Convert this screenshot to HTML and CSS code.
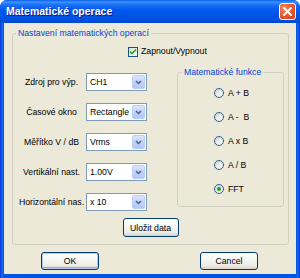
FILE: index.html
```html
<!DOCTYPE html>
<html lang="cs">
<head>
  <meta charset="UTF-8" />
  <title>Matematické operace</title>
  <link rel="stylesheet" href="styles.css">
</head>
<body>
  <div class="window">
    <div class="titlebar">
      <span class="title">Matematické operace</span>
      <span class="close">
        <svg width="9" height="9" viewBox="0 0 9 9"><path d="M1 1 L8 8 M8 1 L1 8" stroke="#fff" stroke-width="1.8" stroke-linecap="square"/></svg>
      </span>
    </div>

    <div class="client">
      <fieldset class="group main-group">
        <legend>Nastavení matematických operací</legend>

        <div class="check-row">
          <span class="checkbox">
            <svg width="8" height="8" viewBox="0 0 8 8"><path d="M1 3.5 L3 5.5 L7 1.5" fill="none" stroke="#21a121" stroke-width="1.6"/></svg>
          </span>
          <span>Zapnout/Vypnout</span>
        </div>

        <div class="columns">
          <div class="fields">
            <div class="field">
              <span class="lbl">Zdroj pro výp.</span>
              <div class="combo"><span class="value">CH1</span><span class="drop"><svg width="7" height="5" viewBox="0 0 7 5"><path d="M1 1 L3.5 3.5 L6 1" fill="none" stroke="#4d6185" stroke-width="1.5"/></svg></span></div>
            </div>
            <div class="field">
              <span class="lbl">Časové okno</span>
              <div class="combo"><span class="value">Rectangle</span><span class="drop"><svg width="7" height="5" viewBox="0 0 7 5"><path d="M1 1 L3.5 3.5 L6 1" fill="none" stroke="#4d6185" stroke-width="1.5"/></svg></span></div>
            </div>
            <div class="field">
              <span class="lbl">Měřítko V / dB</span>
              <div class="combo"><span class="value">Vrms</span><span class="drop"><svg width="7" height="5" viewBox="0 0 7 5"><path d="M1 1 L3.5 3.5 L6 1" fill="none" stroke="#4d6185" stroke-width="1.5"/></svg></span></div>
            </div>
            <div class="field">
              <span class="lbl">Vertikální nast.</span>
              <div class="combo"><span class="value">1.00V</span><span class="drop"><svg width="7" height="5" viewBox="0 0 7 5"><path d="M1 1 L3.5 3.5 L6 1" fill="none" stroke="#4d6185" stroke-width="1.5"/></svg></span></div>
            </div>
            <div class="field">
              <span class="lbl">Horizontální nas.</span>
              <div class="combo"><span class="value">x 10</span><span class="drop"><svg width="7" height="5" viewBox="0 0 7 5"><path d="M1 1 L3.5 3.5 L6 1" fill="none" stroke="#4d6185" stroke-width="1.5"/></svg></span></div>
            </div>
          </div>

          <fieldset class="group func-group">
            <legend>Matematické funkce</legend>
            <div class="radios">
              <div class="radio-row"><span class="radio"></span><span class="rtext">A + B</span></div>
              <div class="radio-row"><span class="radio"></span><span class="rtext">A -  B</span></div>
              <div class="radio-row"><span class="radio"></span><span class="rtext">A x B</span></div>
              <div class="radio-row"><span class="radio"></span><span class="rtext">A / B</span></div>
              <div class="radio-row"><span class="radio checked"></span><span class="rtext">FFT</span></div>
            </div>
          </fieldset>
        </div>

        <div class="save-row">
          <button class="btn save">Uložit data</button>
        </div>
      </fieldset>

      <div class="actions">
        <button class="btn default">OK</button>
        <button class="btn">Cancel</button>
      </div>
    </div>
  </div>
</body>
</html>
```

FILE: styles.css
```css
* {
  box-sizing: border-box;
}

body {
  margin: 0;
  background: #fff;
  font-family: "Liberation Sans", Arial, sans-serif;
  font-size: 8.7px;
  line-height: 11px;
  color: #000;
}

.window {
  width: 300px;
  height: 278px;
  display: flex;
  flex-direction: column;
  background: linear-gradient(to right, #0831d9 0, #166aee 2px, #0054e3 4px, #0054e3 296px, #166aee 298px, #0831d9 300px);
  border-radius: 7px 7px 0 0;
}

.titlebar {
  height: 23px;
  display: flex;
  align-items: center;
  justify-content: space-between;
  padding: 0 4px 0 6px;
  background: linear-gradient(to bottom, #0a5fe6 0, #3c92ff 2px, #1a6ef5 5px, #0058ee 10px, #0054e3 16px, #0050dd 20px, #0046cf 23px);
  border-radius: 7px 7px 0 0;
}

.title {
  color: #fff;
  font-weight: bold;
  font-size: 10.5px;
  text-shadow: 1px 1px #0a1a8a;
}

.close {
  width: 17px;
  height: 17px;
  display: flex;
  align-items: center;
  justify-content: center;
  border: 1px solid #fff;
  border-radius: 3px;
  background: radial-gradient(circle at 30% 30%, #f08a66 0, #e2562d 55%, #c7421a 100%);
}

.client {
  flex: 1;
  margin: 0 4px 4px;
  background: #ece9d8;
  display: flex;
  flex-direction: column;
}

.group {
  margin: 0;
  padding: 0;
  border: 1px solid #d0d0bf;
  border-radius: 3px;
  min-width: 0;
}

.group legend {
  color: #0046d5;
  padding: 0 2px;
  line-height: 11px;
}

.main-group {
  margin: 5px 7px 0 8px;
  padding-bottom: 7px;
}

.main-group > legend {
  margin-left: 3px;
}

.check-row {
  display: flex;
  align-items: center;
  gap: 3px;
  height: 11px;
  margin-top: 7px;
  padding-left: 115px;
}

.checkbox {
  width: 10px;
  height: 10px;
  display: flex;
  align-items: center;
  justify-content: center;
  border: 1px solid #1c5180;
  background: linear-gradient(135deg, #dcdcd7, #fff);
}

.columns {
  display: flex;
  align-items: flex-start;
  margin-top: 10px;
}

.fields {
  width: 134px;
  padding-left: 4px;
}

.field {
  height: 30px;
  display: flex;
  align-items: center;
}

.lbl {
  width: 69px;
  text-align: center;
  white-space: nowrap;
}

.combo {
  width: 61px;
  height: 18px;
  display: flex;
  align-items: stretch;
  border: 1px solid #7f9db9;
  background: #fff;
  padding: 1px;
}

.combo .value {
  flex: 1;
  padding-left: 2px;
  display: flex;
  align-items: center;
}

.combo .drop {
  width: 13px;
  display: flex;
  align-items: center;
  justify-content: center;
  border: 1px solid #b9cef7;
  border-radius: 2px;
  background: linear-gradient(to bottom, #dbe6fd, #c1d3fb 50%, #b4c8f6);
}

.func-group {
  margin-left: 30px;
  width: 107px;
  height: 140px;
}

.func-group > legend {
  margin-left: 4px;
}

.radios {
  padding: 3px 0 0 36px;
}

.radio-row {
  height: 24px;
  display: flex;
  align-items: center;
  gap: 4px;
}

.radio {
  width: 10px;
  height: 10px;
  border-radius: 50%;
  border: 1px solid #2c5e93;
  background: linear-gradient(135deg, #d6d6ce, #fff);
  display: flex;
  align-items: center;
  justify-content: center;
}

.radio.checked::after {
  content: "";
  width: 4px;
  height: 4px;
  border-radius: 50%;
  background: #21a121;
}

.rtext {
  white-space: pre;
}

.save-row {
  display: flex;
  justify-content: center;
  margin-top: 1px;
}

.btn {
  font-family: "Liberation Sans", Arial, sans-serif;
  font-size: 8.7px;
  color: #000;
  border: 1px solid #003c74;
  border-radius: 3px;
  background: linear-gradient(to bottom, #fff 0, #f7f7f4 40%, #ecebe6 80%, #d6d0c5 100%);
  padding: 0;
}

.save {
  width: 56px;
  height: 19px;
}

.actions {
  display: flex;
  gap: 101px;
  padding-left: 37px;
  margin-top: 7px;
}

.actions .btn {
  width: 58px;
  height: 18px;
}

.btn.default {
  box-shadow: inset 0 0 0 1px #b5cdf3, inset 0 -1px 0 1px #89adeb;
}
```
